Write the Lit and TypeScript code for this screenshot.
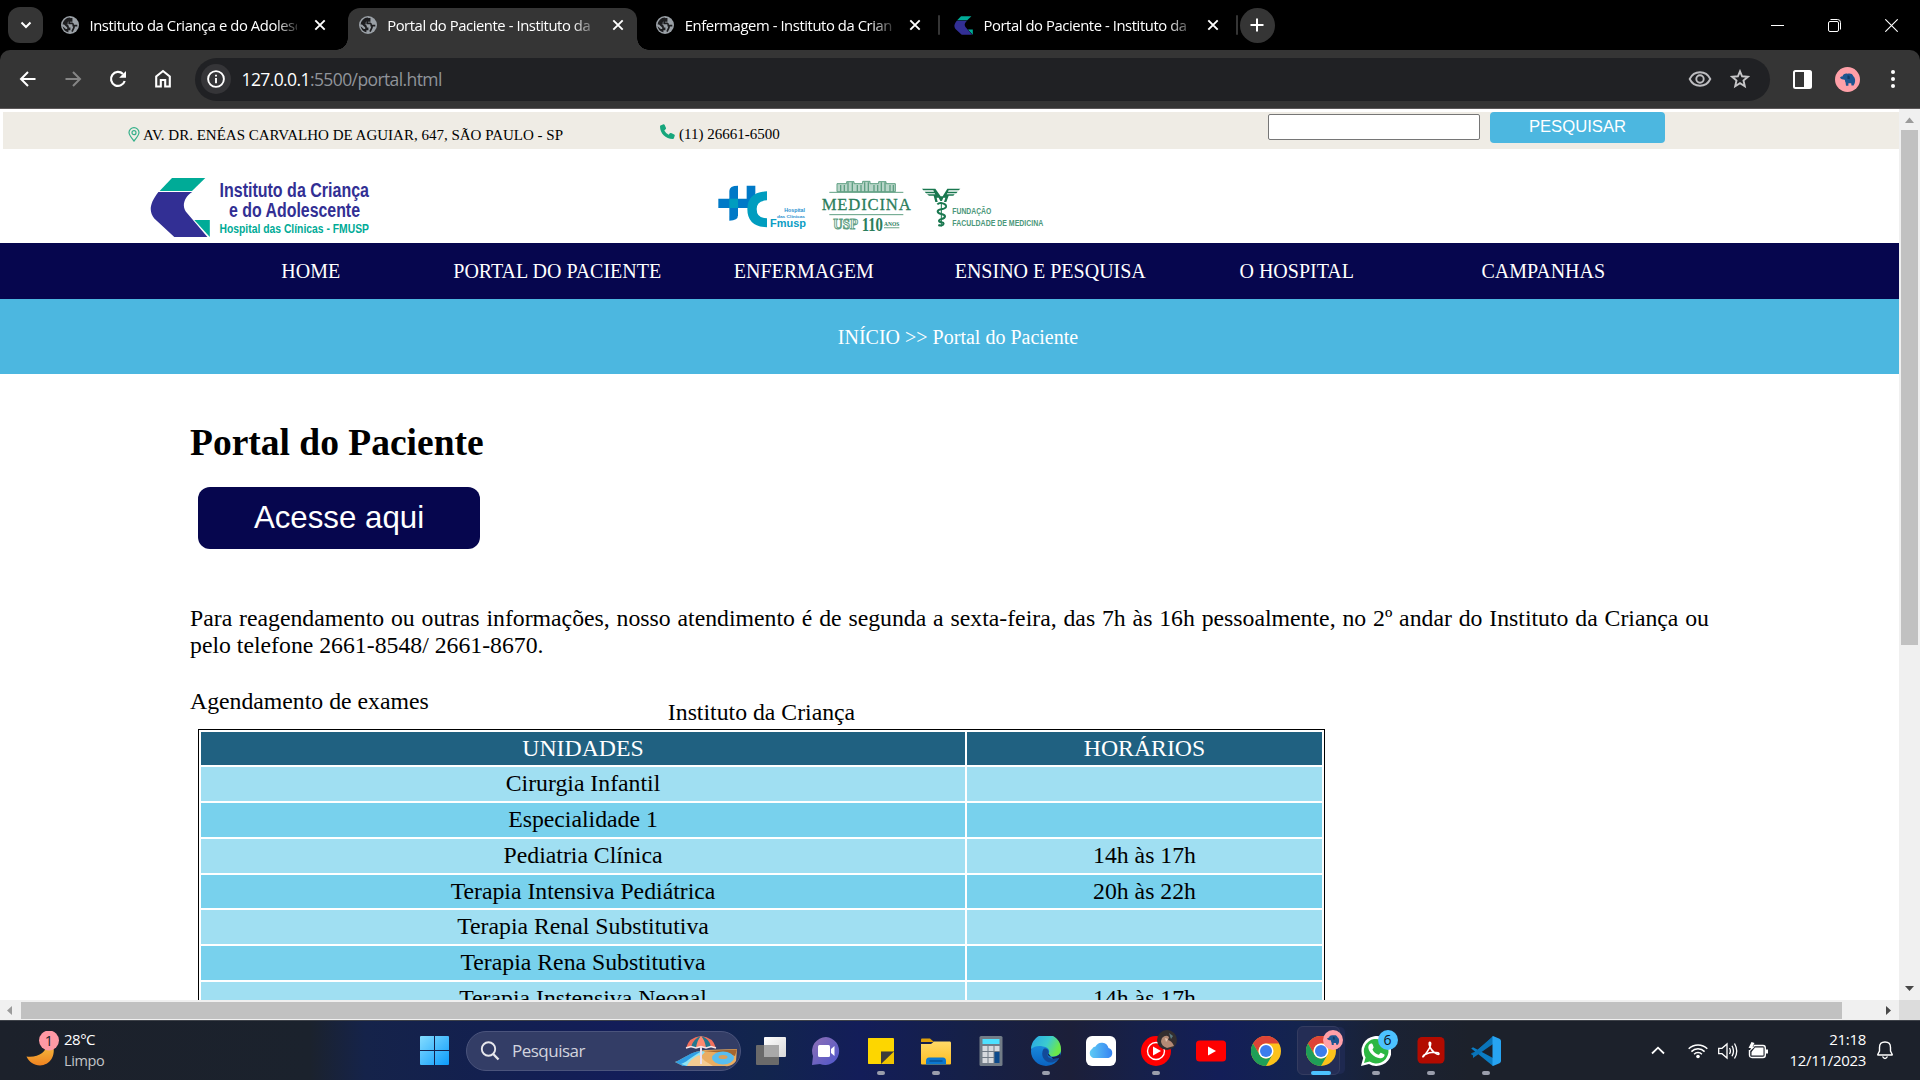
import { LitElement, html, css, svg } from "lit";
import { customElement } from "lit/decorators.js";
import { classMap } from "lit/directives/class-map.js";

/* ---------- shared drawings ---------- */

const globe = html`<svg width="18" height="18" viewBox="0 0 18 18">
  <circle cx="9" cy="9" r="9" fill="#9aa0a6" />
  <path d="M8.6 1.600A7.400 7.400 0 0 0 1.600 8.400H5.200Q7.800 8.400 7.800 10.300V11.600H9.400V14.300H7.400V16.200Q2.400 15.200 1.600 10.300L4.800 13H6.200V11.400L3 8.400H6.800Q6 6.400 7.600 5.200L10.400 4.600V2.600Z" fill="#1d1d1f" />
  <path d="M10.600 2V4.800H8.200V7.400H11.300Q12.300 7.600 12.300 9.600H16.300M12.300 9.600Q13.500 10 12.800 12L11 15.600" fill="none" stroke="#1d1d1f" stroke-width="1.700" />
</svg>`;

const institutoMark = html`<svg width="19" height="19" viewBox="150 177 60 61">
  <path d="M172 178H205.300L192 191H159.600Z" fill="#00ab97" />
  <path d="M158.400 192H192.200C184 197 181 207 187 213L207.400 237H174.300L154.300 218.500C149 212 149 204 158.400 192Z" fill="#322f94" />
  <path d="M194.300 220H209.800V237Z" fill="#00ab97" />
</svg>`;

const closeGlyph = html`<svg width="12" height="12" viewBox="0 0 12 12"><path d="M1.300 1.300 10.700 10.700M10.700 1.300 1.300 10.700" stroke="#fff" stroke-width="1.900" /></svg>`;

const elephant = svg`
  <circle cx="12.500" cy="12.500" r="12.500" fill="#ffa0a8" />
  <path d="M5 10.600C5.500 9.800 6.600 10 7.500 9.300C8.200 7 10.500 6 12.500 6.700C15 6 17.500 6.500 18.200 9C20.300 10.500 20.500 13.500 19.800 16L18.600 18.500H16.500L16.200 16.300H13.400V18.800H11L10.600 15.500C9.800 14.800 10.300 13.200 9.600 12.800C8 12.700 6 12.600 5 10.600Z" fill="#1e5590" />
  <path d="M12.500 8.500C14.500 8 15.500 10 14.500 12.300L12.300 11.800Z" fill="#123a66" />`;

const chromeMark = (size: number) => html`<svg width=${size} height=${size} viewBox="0 0 48 48">
  <circle cx="24" cy="24" r="24" fill="#fcc21b" />
  <path d="M3.200 12A24 24 0 0 1 44.800 12H24A12 12 0 0 0 13.600 30Z" fill="#dd4437" />
  <path d="M3.200 12A24 24 0 0 0 24 48L34.400 30A12 12 0 0 1 13.600 30Z" fill="#1f9e58" />
  <circle cx="24" cy="24" r="12" fill="#fff" />
  <circle cx="24" cy="24" r="9.600" fill="#3b7ded" />
</svg>`;

/* ---------- browser window frame ---------- */

interface Tab { title: string; icon: unknown; active?: boolean; sep?: boolean; }

const tabs: Tab[] = [
  { title: "Instituto da Criança e do Adolescente", icon: globe },
  { title: "Portal do Paciente - Instituto da Criança", icon: globe, active: true },
  { title: "Enfermagem - Instituto da Criança e", icon: globe, sep: true },
  { title: "Portal do Paciente - Instituto da Criança", icon: institutoMark, sep: true },
];

@customElement("browser-chrome")
class BrowserChrome extends LitElement {
  static styles = css`
    :host { display: block; height: 109px; background: #000; font-family: "Open Sans", "Noto Sans", sans-serif; color: #fff; }
    svg { display: block; flex: none; }
    .strip { display: flex; height: 50px; padding-left: 8px; align-items: center; }
    .search-tabs { width: 35px; height: 36px; border-radius: 12px; background: #353535; display: grid; place-items: center; }
    .tabs { display: flex; margin-left: 7px; height: 50px; }
    .tab { position: relative; width: 298px; height: 50px; margin-right: -0.350px; box-sizing: border-box; padding: 0 22px 0 11px; display: flex; align-items: center; }
    .tab svg { flex: none; }
    .title { margin-left: 10.500px; width: 210px; height: 24px; line-height: 24px; overflow: hidden; white-space: nowrap; font-size: 14.800px; letter-spacing: -0.420px;
      -webkit-mask-image: linear-gradient(90deg, #000 185px, transparent 213px); mask-image: linear-gradient(90deg, #000 185px, transparent 213px); }
    .close { margin-left: 17.500px; }
    .active { z-index: 1; }
    .active::before { content: ""; position: absolute; left: 0; right: 9px; top: 8px; bottom: 0; border-radius: 12px 12px 0 0; background: #353535; z-index: -1; }
    .active::after { content: ""; position: absolute; left: -12px; right: -3px; bottom: 0; height: 12px; z-index: -1;
      background: radial-gradient(circle at 0 0, transparent 11.500px, #353535 12px) left / 12px 12px no-repeat, radial-gradient(circle at 100% 0, transparent 11.500px, #353535 12px) right / 12px 12px no-repeat; }
    .sep::after { content: ""; position: absolute; right: 3px; top: 15px; width: 2px; height: 20px; background: #353535; border-radius: 1px; }
    .plus { width: 35px; height: 35px; border-radius: 50%; background: #353535; display: grid; place-items: center; margin-left: -1px; }
    .window { margin-left: auto; display: flex; gap: 44px; padding-right: 22px; align-items: center; }
    .bar { height: 58px; background: #353535; border-bottom: 1px solid #5c5859; border-radius: 10px 10px 0 0; display: flex; align-items: center; box-sizing: content-box; }
    .nav { display: flex; width: 195px; padding-left: 17px; box-sizing: border-box; gap: 23px; }
    .omni { width: 1575px; height: 43px; border-radius: 22px; background: #202124; display: flex; align-items: center; box-sizing: border-box; padding: 0 20px 0 6px; }
    .info { width: 30px; height: 30px; border-radius: 50%; background: #353538; display: grid; place-items: center; }
    .url { margin-left: 10.500px; flex: 1; font-size: 17.500px; letter-spacing: -0.600px; line-height: 24px; color: #90949a; }
    .url b { font-weight: 400; color: #fff; }
    .omni .right { display: flex; gap: 18px; align-items: center; }
    .tools { display: flex; align-items: center; margin-left: 23px; }
    .avatar { margin-left: 23px; }
    .dots { margin-left: 30.500px; }
  `;

  render() {
    return html`
      <div class="strip">
        <div class="search-tabs"><svg width="12" height="8" viewBox="0 0 12 8"><path d="M1.500 1.500 6 6 10.500 1.500" fill="none" stroke="#fff" stroke-width="2" /></svg></div>
        <div class="tabs">
          ${tabs.map((t) => html`<div class=${classMap({ tab: true, active: !!t.active, sep: !!t.sep })}>${t.icon}<span class="title">${t.title}</span><span class="close">${closeGlyph}</span></div>`)}
        </div>
        <div class="plus"><svg width="14" height="14" viewBox="0 0 14 14"><path d="M7 0.500V13.500M0.500 7H13.500" stroke="#fff" stroke-width="2" /></svg></div>
        <div class="window">
          <svg width="13" height="13"><path d="M0 6.500H13" stroke="#fff" /></svg>
          <svg width="13" height="13" viewBox="0 0 13 13" fill="none" stroke="#fff"><rect x="0.500" y="2.500" width="10" height="10" rx="1.500" /><path d="M2.500 0.500H9.500Q12.500 0.500 12.500 3.500V10.500" /></svg>
          <svg width="13" height="13" viewBox="0 0 13 13" stroke="#fff"><path d="M0.300 0.300 12.700 12.700M12.700 0.300 0.300 12.700" stroke-width="1.100" /></svg>
        </div>
      </div>
      <div class="bar">
        <div class="nav">
          <svg width="22" height="22" viewBox="-11 -11 22 22" fill="none" stroke="#fff" stroke-width="2"><path d="M7.500 0H-6.500M0 -7 -7 0 0 7" /></svg>
          <svg width="22" height="22" viewBox="-11 -11 22 22" fill="none" stroke="#858585" stroke-width="2"><path d="M-7.500 0H6.500M0 -7 7 0 0 7" /></svg>
          <svg width="22" height="22" viewBox="-11 -11 22 22" fill="none"><path d="M6.700 2A7 7 0 1 1 5 -5" stroke="#fff" stroke-width="2.200" /><path d="M8 -8V-1.200H1.200Z" fill="#fff" /></svg>
          <svg width="22" height="22" viewBox="-11 -11 22 22" fill="none" stroke="#fff" stroke-width="2.100"><path d="M-6.800 7.500V-2.500L0 -8 6.800 -2.500V7.500H2.200V1H-2.200V7.500Z" /></svg>
        </div>
        <div class="omni">
          <span class="info"><svg width="18" height="18" viewBox="0 0 18 18" fill="none" stroke="#fff" stroke-width="1.900"><circle cx="9" cy="9" r="7.900" /><path d="M9 8V13.300M9 4.700V6.600" /></svg></span>
          <span class="url"><b>127.0.0.1</b>:5500/portal.html</span>
          <span class="right">
            <svg width="24" height="18" viewBox="-12 -9 24 18" fill="none" stroke="#bdbdc0" stroke-width="1.900"><path d="M-10.300 0C-6 -9 6 -9 10.300 0C6 9 -6 9 -10.300 0Z" /><circle r="3.700" /></svg>
            <svg width="20" height="20" viewBox="-10 -10 20 20" fill="none" stroke="#c6c6c8" stroke-width="1.900"><path d="M0 -7.700 2.100 -2.700 7.800 -2.200 3.500 1.500 4.800 7.300 0 4.200 -4.800 7.300 -3.500 1.500 -7.800 -2.200 -2.100 -2.700Z" /></svg>
          </span>
        </div>
        <div class="tools">
          <svg width="19" height="19" viewBox="0 0 19 19"><rect x="1" y="1" width="17" height="17" rx="1.500" fill="none" stroke="#fff" stroke-width="2" /><path d="M11 1H18V18H11Z" fill="#fff" /></svg>
          <svg class="avatar" width="25" height="25">${elephant}</svg>
          <svg class="dots" width="4" height="18" fill="#fff"><circle cx="2" cy="2" r="2" /><circle cx="2" cy="9" r="2" /><circle cx="2" cy="16" r="2" /></svg>
        </div>
      </div>`;
  }
}

/* ---------- hospital page ---------- */

const menu = ["HOME", "PORTAL DO PACIENTE", "ENFERMAGEM", "ENSINO E PESQUISA", "O HOSPITAL", "CAMPANHAS"];

const schedule: [string, string][] = [
  ["Cirurgia Infantil", ""],
  ["Especialidade 1", ""],
  ["Pediatria Clínica", "14h às 17h"],
  ["Terapia Intensiva Pediátrica", "20h às 22h"],
  ["Terapia Renal Substitutiva", ""],
  ["Terapia Rena Substitutiva", ""],
  ["Terapia Instensiva Neonal", "14h às 17h"],
];

@customElement("portal-page")
class PortalPage extends LitElement {
  static styles = css`
    :host { display: block; height: 891px; overflow: hidden; background: #fff; color: #000; font-family: "Liberation Serif", serif; font-size: 23.750px; line-height: 27px; }
    svg { display: block; flex: none; }
    .top { height: 37px; margin: 3px 0 0 3px; background: #efece5; display: flex; align-items: flex-start; font-size: 15px; }
    .address { display: flex; width: 532px; padding: 10px 0 0 125px; box-sizing: border-box; margin-right: 125px; white-space: nowrap; }
    .address svg { margin: 5px 3px 0 0; }
    .phone { display: flex; padding-top: 9px; width: 608px; }
    .phone svg { margin: 3px 4px 0 0; }
    .query { width: 212px; height: 26px; margin-top: 2px; box-sizing: border-box; border: 1.500px solid #767676; border-radius: 2px; background: #fff; padding: 0; }
    .go { margin-left: 10px; width: 175px; height: 31px; border: 0; padding: 0 0 2px; border-radius: 4px; background: #4cb7e0; color: #fff; font: 16.670px "Liberation Sans", sans-serif; }
    .brands { height: 94px; display: flex; align-items: flex-start; padding: 27px 0 0 150px; box-sizing: border-box; }
    .partners { margin-left: 346px; }
    .menu { height: 56px; background: #06064e; display: grid; grid-template-columns: repeat(6, 246.500px); padding: 1px 0 0 187.500px; box-sizing: border-box; align-items: center; justify-items: center; color: #fff; font-size: 20px; white-space: nowrap; }
    .crumbs { height: 75px; background: #4cb7e0; color: #fff; font-size: 20px; display: flex; align-items: center; justify-content: center; padding: 1px 0 0 17px; box-sizing: border-box; }
    main { padding: 45px 190px 0; }
    h1 { margin: 0; font-size: 37.500px; line-height: 47px; }
    .access { display: block; margin: 21px 0 56px 8px; width: 282px; height: 62px; border: 0; border-radius: 12px; background: #06064e; color: #fff; font: 31.250px "Liberation Sans", sans-serif; padding: 0; }
    p { margin: 0; width: 1519px; text-align: justify; }
    .heading { display: grid; width: 1143px; height: 41px; margin-top: 29px; box-sizing: border-box; }
    .heading > * { grid-area: 1 / 1; }
    .caption { padding-top: 10.500px; text-align: center; }
    .table { width: 1127px; margin-left: 8px; box-sizing: border-box; border: 1px solid #000; padding: 2px; display: grid; grid-template-columns: 764px 355px; gap: 2px; grid-template-rows: 33px 34px 34px 34px 33px 34px 34px 34px; text-align: center; }
    .table > div { line-height: 33px; background: #a0dff2; }
    .table > .alt { background: #78d1ed; }
    .table > .head { background: #206181; color: #fff; }
    .sans { font-family: "Liberation Sans Narrow", "Liberation Sans", sans-serif; font-weight: 700; }
    .serif { font-family: "Liberation Serif", serif; }
  `;

  render() {
    return html`
      <div class="top">
        <div class="address">
          <svg width="12" height="15" viewBox="0 0 12 15" fill="none" stroke="#35b08a" stroke-width="1.200"><path d="M6 14C3 10.500 1 8 1 5.600A5 5 0 0 1 11 5.600C11 8 9 10.500 6 14Z" /><circle cx="6" cy="5.700" r="2" /></svg>
          <span>AV. DR. ENÉAS CARVALHO DE AGUIAR, 647, SÃO PAULO - SP</span>
        </div>
        <div class="phone">
          <svg width="15" height="15" viewBox="0 0 15 15"><path d="M0.500 1.600 3.500 0.300Q4.300 0.100 4.700 0.900L6 4Q6.200 4.800 5.600 5.300L4.300 6.400Q5.800 9.200 8.700 10.700L9.800 9.300Q10.300 8.700 11.100 9L14.200 10.400Q15 10.800 14.800 11.500L13.900 14.300Q13.600 15 12.900 15C5.500 15 0 9 0 2.400Q0 1.800 0.500 1.600Z" fill="#17a67c" /></svg>
          <span>(11) 26661-6500</span>
        </div>
        <input class="query" />
        <button class="go">PESQUISAR</button>
      </div>

      <div class="brands">
        <svg width="222" height="63" viewBox="150 176 222 63">
          <path d="M172 178H205.300L192 191H159.600Z" fill="#00ab97" />
          <path d="M158.400 192H192.200C184 197 181 207 187 213L207.400 237H174.300L154.300 218.500C149 212 149 204 158.400 192Z" fill="#322f94" />
          <path d="M194.300 220H209.800V237Z" fill="#00ab97" />
          <g class="sans" fill="#322f94">
            <text x="219.500" y="196.500" font-size="20" textLength="149.500" lengthAdjust="spacingAndGlyphs">Instituto da Criança</text>
            <text x="229" y="216.800" font-size="20" textLength="131" lengthAdjust="spacingAndGlyphs">e do Adolescente</text>
            <text x="219.500" y="232.500" font-size="12" textLength="149.500" lengthAdjust="spacingAndGlyphs" fill="#00ab97">Hospital das Clínicas - FMUSP</text>
          </g>
        </svg>
        <svg class="partners" width="327" height="59" viewBox="234 213 981 177">
          <path d="M268 347V258Q268 242 294 242V331Q294 347 268 347Z" fill="#0079c7" />
          <path d="M235 281H330V309H235ZM320 242H346V290H320Z" fill="#0079c7" />
          <path d="M268 281H294V309H268Z" fill="#009dbf" />
          <path d="M381 259Q322 262 322 312Q322 365 381 367V340Q350 340 350 312Q350 288 381 286Z" fill="#009dbf" />
          <g class="sans">
            <text x="433" y="322" font-size="14" textLength="62" lengthAdjust="spacingAndGlyphs" fill="#2a90cf">Hospital</text>
            <text x="411" y="339" font-size="13" textLength="84" lengthAdjust="spacingAndGlyphs" fill="#2a90cf">das Clínicas</text>
            <text x="390" y="366" font-size="33" textLength="108" lengthAdjust="spacingAndGlyphs" fill="#0b9dc4">Fmusp</text>
          </g>
          <g fill="none" stroke="#5f9f83" stroke-width="3">
            <path d="M568 262H790M568 329H790" />
            <path d="M591 236H620V230H642V236H668V229H690V236H716V230H738V236H766V260H591Z" fill="#b9d6c9" stroke-width="3" />
            <path d="M602 240V260M613 240V260M624 232V260M637 232V260M652 240V260M663 240V260M674 232V260M685 232V260M702 240V260M713 240V260M724 232V260M735 232V260M750 240V260M760 240V260" stroke-width="4" />
          </g>
          <g class="serif" fill="#2b7d5b">
            <text x="545" y="314" font-size="50" textLength="267" lengthAdjust="spacing" stroke="#2b7d5b" stroke-width="0.800">MEDICINA</text>
            <text x="580" y="373" font-size="44" font-weight="700" textLength="74" lengthAdjust="spacingAndGlyphs" fill="#fff" stroke="#5f9f83" stroke-width="3">USP</text>
            <text x="665" y="379" font-size="58" font-weight="700" textLength="64" lengthAdjust="spacingAndGlyphs">110</text>
            <text x="732" y="362" font-size="17" font-weight="700" textLength="46" lengthAdjust="spacingAndGlyphs">ANOS</text>
          </g>
          <path d="M732 368H778" stroke="#8fbba6" stroke-width="4" />
          <g fill="#19774f">
            <path d="M846 251H886L902 274L908 274L922 251H961L956 256H926L924 260H953L949 265H922L920 268H944L940 272H926L919 291H912L916 278H910L906 288H901L896 278H890L893 291H886L881 272H867L861 268H886L884 265H858L854 260H882L880 256H850Z" />
            <path d="M904 292V364" stroke="#19774f" stroke-width="3" />
            <path d="M892 298C900 290 920 296 918 306C914 316 892 310 893 320C894 330 914 324 915 334C914 344 898 340 897 347C897 354 911 350 911 356C910 363 900 362 895 360" fill="none" stroke="#19774f" stroke-width="6" />
          </g>
          <g class="sans" fill="#4b977a">
            <text x="937" y="326" font-size="25" textLength="117" lengthAdjust="spacingAndGlyphs">FUNDAÇÃO</text>
            <text x="937" y="363" font-size="25" textLength="273" lengthAdjust="spacingAndGlyphs">FACULDADE DE MEDICINA</text>
          </g>
        </svg>
      </div>

      <nav class="menu">${menu.map((m) => html`<span>${m}</span>`)}</nav>
      <div class="crumbs">INÍCIO &gt;&gt; Portal do Paciente</div>

      <main>
        <h1>Portal do Paciente</h1>
        <button class="access">Acesse aqui</button>
        <p>Para reagendamento ou outras informações, nosso atendimento é de segunda a sexta-feira, das 7h às 16h pessoalmente, no 2º andar do Instituto da Criança ou pelo telefone 2661-8548/ 2661-8670.</p>
        <div class="heading"><span>Agendamento de exames</span><span class="caption">Instituto da Criança</span></div>
        <div class="table">
          <div class="head">UNIDADES</div><div class="head">HORÁRIOS</div>
          ${schedule.map(([unit, hours], i) => html`<div class=${classMap({ alt: i % 2 === 1 })}>${unit}</div><div class=${classMap({ alt: i % 2 === 1 })}>${hours}</div>`)}
        </div>
      </main>`;
  }
}

/* ---------- taskbar ---------- */

interface App { art: unknown; mark?: "open" | "current"; }

const apps: App[] = [
  { art: html`<svg width="32" height="32" viewBox="-1 -1 32 32"><defs><linearGradient id="w" x1="0" y1="0" x2="1" y2="1"><stop stop-color="#fff" /><stop offset="1" stop-color="#d8d8d8" /></linearGradient></defs><rect y="9" width="23" height="20" rx="1" fill="#6a6a6a" /><rect x="8" y="1" width="22" height="20" rx="1" fill="url(#w)" /><rect x="8" y="9" width="15" height="12" fill="#a9a9a9" /></svg>` },
  { art: html`<svg width="30" height="30" viewBox="0 0 30 30"><defs><linearGradient id="c" x1="0" y1="0" x2="1" y2="1"><stop stop-color="#8f70b4" /><stop offset="1" stop-color="#4e56cc" /></linearGradient></defs><path d="M15 1A14 14 0 1 1 9 28L1 29 2 20A14 14 0 0 1 15 1Z" fill="url(#c)" /><rect x="7" y="9" width="12" height="12" rx="1.500" fill="#fff" /><path d="M20 13 23.500 10V20L20 17Z" fill="#fff" /></svg>` },
  { mark: "open", art: html`<svg width="30" height="30" viewBox="0 0 30 30"><path d="M2.500 2H27Q28 2 28 3V15L15.500 28H2.500Q2 28 2 27V3Q2 2 2.500 2Z" fill="#fdd600" /><path d="M15 28V15.500H28V28Z" fill="#f0c400" /><path d="M15 15.500H28L15 28Z" fill="#3b3b3b" /></svg>` },
  { mark: "open", art: html`<svg width="30" height="30" viewBox="0 0 30 30"><defs><linearGradient id="f" x1="0" y1="0" x2="0" y2="1"><stop stop-color="#ffd968" /><stop offset="1" stop-color="#fdbe22" /></linearGradient></defs><path d="M0 3.500Q0 2.500 1 2.500H9L13 6H0Z" fill="#dfa00a" /><path d="M0 8H10L13 5.500H29Q30 5.500 30 7V27.500Q30 28.500 29 28.500H1Q0 28.500 0 27.500Z" fill="url(#f)" /><path d="M5 28.500V25Q5 21.500 8 21.500H22Q25 21.500 25 25V28.500Z" fill="#0b78d0" /><path d="M8.500 25H21.500" stroke="#084f91" stroke-width="1.400" /></svg>` },
  { art: html`<svg width="30" height="30" viewBox="0 0 30 30"><rect x="3.500" width="23" height="30" rx="1.500" fill="#727c87" /><rect x="6.500" y="3" width="17" height="5" fill="#4ee1ff" /><path d="M6.500 10H11.500V15H6.500ZM12.500 10H17.500V15H12.500ZM18.500 10H23.500V15H18.500ZM6.500 16H11.500V21H6.500ZM12.500 16H17.500V21H12.500ZM6.500 22H11.500V27H6.500ZM12.500 22H17.500V27H12.500Z" fill="#d7dade" /><path d="M18.500 16H23.500V27H18.500Z" fill="#0c4a8c" /></svg>` },
  { mark: "open", art: html`<svg width="30" height="30" viewBox="0 0 30 30"><defs><linearGradient id="e1" x1="0" y1="0" x2="1" y2="0.400"><stop stop-color="#27a4e8" /><stop offset="0.600" stop-color="#3bcbd0" /><stop offset="1" stop-color="#6be84a" /></linearGradient><linearGradient id="e2" x1="0" y1="0" x2="0" y2="1"><stop stop-color="#209ce8" /><stop offset="1" stop-color="#0a63c2" /></linearGradient></defs><circle cx="15" cy="15" r="15" fill="url(#e2)" /><path d="M0 13A15 15 0 0 1 30 13.500C30.500 18 26 21 21.500 20.500C17.500 20 17 18.500 18 17C19 13 16 11 12 10.500C7 9.500 3 10.500 0 13Z" fill="url(#e1)" /><path d="M12.500 13C9 19 13 26.500 20 26.500C24 26.500 27 24 28 22C28 22 24 24 20 22.500C15.500 21 16.500 18 17.500 17C18.500 14 15 11.500 12.500 13Z" fill="#134a98" /><path d="M17 17C18 18 15.500 18.500 18.500 20.300C22 22 27 20.500 29 17.500L30.500 22 22 23Z" fill="#17204f" /></svg>` },
  { art: html`<svg width="30" height="30" viewBox="0 0 30 30"><defs><linearGradient id="i" x1="0" y1="0" x2="1" y2="0"><stop stop-color="#5fcbf5" /><stop offset="1" stop-color="#3583f2" /></linearGradient></defs><rect width="30" height="30" rx="6" fill="#fff" /><path d="M7.500 22A5 5 0 0 1 6 13A4 4 0 0 1 9.500 10.500A7 7 0 0 1 22.500 12A5.200 5.200 0 0 1 22.500 22Z" fill="url(#i)" /></svg>` },
  { mark: "open", art: html`<svg width="42" height="42" viewBox="-6 -6 42 42"><circle cx="15" cy="15" r="15" fill="#f00" /><circle cx="15" cy="15" r="8.500" fill="none" stroke="#fff" stroke-width="1.400" /><path d="M12 10.500 20 15 12 19.500Z" fill="#fff" /><circle cx="26" cy="4" r="10" fill="#332e30" /><path d="M21 2Q25 -2 28 1L27 4Q31 5 33 10L26 12Q20 10 20 5Z" fill="#b48a75" /><path d="M28 -3 32 0 30 3Z" fill="#5c7a80" /><path d="M24 2 27 3 25 6Z" fill="#e2c3b0" /></svg>` },
  { art: html`<svg width="30" height="30" viewBox="0 0 30 30"><rect y="4.500" width="30" height="21" rx="3.500" fill="#f00" /><path d="M12 10.500 20 15 12 19.500Z" fill="#fff" /></svg>` },
  { art: chromeMark(30) },
  { mark: "current", art: html`${chromeMark(30)}<svg class="badge" width="20" height="20" viewBox="0 0 25 25">${elephant}</svg>` },
  { mark: "open", art: html`<svg width="30" height="30" viewBox="0 0 30 30"><path d="M0 30 2.200 22A15 15 0 1 1 8 28Z" fill="#fff" /><path d="M3 27 4.600 21.500A12.300 12.300 0 1 1 8.600 25.600Z" fill="#2cb742" /><path d="M10 7.500C12 7 12 10 12.700 11.300C12.700 12.500 11 13 11.700 14C13 16.500 15 18 17.500 18.800C18.500 18.500 19 16.500 20 16.700L23.500 18.500C24 21 21 22.500 19 22.300C13 21.500 7.500 16 7.300 11.500C7.300 9.500 8.500 7.800 10 7.500Z" fill="#fff" /></svg><span class="count">6</span>` },
  { mark: "open", art: html`<svg width="30" height="30" viewBox="0 0 30 30"><rect x="1.500" y="1" width="27" height="26.500" rx="4.500" fill="#b30b00" /><path d="M7.500 20.500C10 17.500 15 10.500 14.700 7.500C14.700 5.500 12.700 6 13.200 8.500C14 12.500 17 16 21 18.200C23 19.200 23.800 17.500 22 16.700C18 15.700 13 16.500 9 18.500C6.500 19.800 6.300 21.700 7.500 20.500Z" fill="none" stroke="#fff" stroke-width="1.500" /></svg>` },
  { mark: "open", art: html`<svg width="30" height="30" viewBox="0 0 30 30"><path d="M22 0 2 18.500Q1 19.300 0.300 18.500L0.200 17.200 22 8Z" fill="#0069ab" /><path d="M0.200 12.500 2 11.200 22 22V30L0.200 12.500Z" fill="#0b7dc4" /><path d="M22 8 2 22V19.500L0.800 18.500 22 0.500Z" fill="#0a74b9" /><path d="M22 0 28.500 2.700Q30 3.500 30 5V25Q30 26.500 28.500 27.300L22 30Q21 29.500 21.500 28V2Q21 0.500 22 0Z" fill="#27a4f2" /></svg>` },
];

@customElement("task-bar")
class TaskBar extends LitElement {
  static styles = css`
    :host { display: flex; height: 60px; box-sizing: border-box; border-top: 1px solid #3e4249; align-items: center; color: #fff; font: 15px/21px "Open Sans", "Noto Sans", sans-serif;
      background: linear-gradient(90deg, #1c212b 0, #1b222d 310px, #15234a 365px, #13204f 480px, #131d59 620px, #12254d 760px, #131d59 860px, #152049 960px, #1c1f39 1070px, #16204a 1140px, #131e58 1220px, #14244e 1300px, #1a2235 1380px, #1c212b 1470px, #1c212b 100%); }
    svg { display: block; flex: none; }
    .weather { display: flex; width: 420px; padding-left: 26px; box-sizing: border-box; align-items: center; height: 58px; }
    .weather span { display: block; }
    .weather .now { margin: -2px 0 0 4px; letter-spacing: -0.500px; line-height: 21px; }
    .weather .dim { color: #c3c5c9; letter-spacing: -0.400px; font-size: 14.500px; }
    .search { width: 275px; height: 40px; border-radius: 20px; margin-left: 17px; background: #333d66; border: 1px solid #4b547c; box-sizing: border-box; display: flex; align-items: center; padding: 0 3px 0 13px; }
    .search label { margin-left: 12px; flex: 1; font-size: 17px; letter-spacing: -0.500px; color: #d2d4de; line-height: 24px; }
    .apps { display: flex; margin-left: 2.500px; }
    .app { position: relative; width: 55px; height: 58px; display: grid; place-items: center; }
    .open::after, .current::after { content: ""; position: absolute; left: 23.500px; bottom: 5px; width: 8px; height: 4px; border-radius: 2px; background: #9a9eac; }
    .current::after { left: 17.500px; width: 20px; background: #4cc2ff; }
    .current::before { content: ""; position: absolute; left: 3px; top: 4px; width: 43px; height: 49px; border-radius: 6px; background: #242d55; border: 1px solid #343c60; box-sizing: border-box; box-shadow: 6px 0 0 -1px #1e2950; }
    .current svg { position: relative; }
    .current .badge { position: absolute; left: 29px; top: 8px; }
    .count { position: absolute; left: 29px; top: 8px; width: 20px; height: 20px; border-radius: 50%; background: #4cc2ff; color: #10141c; text-align: center; font-size: 14px; line-height: 20px; }
    .tray { margin-left: auto; display: flex; align-items: center; padding-right: 27px; }
    .clock { margin: -2px 11px 0 21px; text-align: right; width: 77px; white-space: nowrap; letter-spacing: -0.300px; }
    .clock div { height: 21px; }
    .gap-l { margin-left: 23px; }
    .gap-s { margin-left: 10px; }
  `;

  render() {
    return html`
      <div class="weather">
        <svg width="34" height="40" viewBox="0 0 34 40"><defs><linearGradient id="m" x1="0" y1="0" x2="0" y2="1"><stop stop-color="#f6c343" /><stop offset="1" stop-color="#ef8220" /></linearGradient></defs>
          <path d="M27 14C30 25 24 34 14 34.500C8 34.500 3 31 0.500 25.500C12 27 21 21 21 12Z" fill="url(#m)" />
          <circle cx="23" cy="9.500" r="10" fill="#ff99a4" /><text x="23" y="15" font-size="14.500" text-anchor="middle" fill="#20242c">1</text></svg>
        <div class="now"><span>28°C</span><span class="dim">Limpo</span></div>
      </div>
      <svg width="29" height="29" viewBox="0 0 29 29"><defs><linearGradient id="g" x1="0" y1="0" x2="1" y2="1"><stop stop-color="#84dcff" /><stop offset="1" stop-color="#0c9bfb" /></linearGradient></defs><path d="M0 1Q0 0 1 0H14V14H0ZM15 0H28Q29 0 29 1V14H15ZM0 15H14V29H1Q0 29 0 28ZM15 15H29V28Q29 29 28 29H15Z" fill="url(#g)" /></svg>
      <div class="search">
        <svg width="20" height="20" viewBox="0 0 20 20" fill="none" stroke="#e6e7ec" stroke-width="1.900"><circle cx="8.500" cy="8" r="6.700" /><path d="M13.200 13 18.500 18.500" stroke-width="2.400" /></svg>
        <label>Pesquisar</label>
        <svg width="62" height="34" viewBox="0 0 62 34">
          <path d="M0 28C10 24 17 17 30 16L62 15L61 27Q57 33 50 32H8Z" fill="#e9ad62" />
          <path d="M0 28C10 24 15 18 26 17C24 23 14 25 12 32H8Z" fill="#2f9ee4" />
          <path d="M6 30C14 27 19 20 28 17L30 18C26 24 15 26 12 32Z" fill="#8fe3f2" />
          <path d="M28 17 62 15.500 60 22 50 19Z" fill="#a4652f" />
          <path d="M30 27 38 32H12Q15 25 24 21Z" fill="#f3cb92" />
          <ellipse cx="48" cy="24" rx="11" ry="6.500" fill="#58bdf0" /><ellipse cx="48" cy="23" rx="4.500" ry="2" fill="#d7a05c" />
          <path d="M26 2V30" stroke="#eadff0" stroke-width="2" />
          <path d="M11 14Q14 3 26 2Q38 3 41 14L36 13 31 14 26 13 21 14 16 13Z" fill="#f2705c" />
          <path d="M16 13Q18 5 26 2L21 14ZM26 2Q35 5 36 13L31 14Z" fill="#23788f" /><path d="M21 14Q22 6 26 2Q30 6 31 14L26 13Z" fill="#ff8a70" />
          <path d="M11 14 16 12.500 21 14 26 12.500 31 14 36 12.500 41 14" fill="none" stroke="#f3e6ea" stroke-width="1.600" />
        </svg>
      </div>
      <div class="apps">${apps.map((a) => html`<div class="app ${a.mark ?? ""}">${a.art}</div>`)}</div>
      <div class="tray">
        <svg width="14" height="9" viewBox="0 0 14 9"><path d="M1 7.500 7 1.700 13 7.500" fill="none" stroke="#fff" stroke-width="1.800" /></svg>
        <svg class="gap-l" width="20" height="16" viewBox="0 0 20 16" fill="none" stroke="#fff" stroke-width="1.500"><path d="M0.700 5.800A13 13 0 0 1 19.300 5.800M3.400 8.600A9.300 9.300 0 0 1 16.600 8.600M6.100 11.200A5.500 5.500 0 0 1 13.900 11.200" /><circle cx="10" cy="13.500" r="1.800" fill="#fff" stroke="none" /></svg>
        <svg class="gap-s" width="20" height="18" viewBox="0 0 20 18" fill="none" stroke="#fff" stroke-width="1.300"><path d="M0.700 6.300H4L9 2V16L4 11.700H0.700Z" /><path d="M11.500 6Q13.300 9 11.500 12M14 3.800Q17 9 14 14.200M16.500 1.500Q21 9 16.500 16.500" /></svg>
        <svg class="gap-s" width="20" height="18" viewBox="0 0 20 18"><path d="M5.500 3.500H15Q17.300 3.500 17.300 6V13Q17.300 15.500 15 15.500H4Q1.500 15.500 1.500 13V8" fill="none" stroke="#fff" stroke-width="1.400" /><path d="M7 5.500H15.500V13.500H3.500V10Z" fill="#fff" /><path d="M18 7.500H20V11.500H18Z" fill="#fff" /><path d="M3.500 0 0.500 6H3L1.500 9.500 7 4.500H4.500L6.500 1Z" fill="#fff" /></svg>
        <div class="clock"><div>21:18</div><div>12/11/2023</div></div>
        <svg width="16" height="19" viewBox="0 0 16 19" fill="none" stroke="#fff" stroke-width="1.400"><path d="M2.300 14H13.700L15 14Q15.500 14 15 13L13.500 10V6.500Q13.500 1 8 1Q2.500 1 2.500 6.500V10L1 13Q0.500 14 1 14Z" /><path d="M5.500 15.500Q8 19.500 10.500 15.500" /></svg>
      </div>`;
  }
}

/* ---------- desktop ---------- */

@customElement("app-root")
class AppRoot extends LitElement {
  static styles = css`
    :host { display: block; width: 1920px; height: 1080px; overflow: hidden; background: #000; }
    .view { display: grid; grid-template-columns: 1899px 21px; grid-template-rows: 891px 20px; }
    .v, .h { background: #f0f0f0; display: flex; }
    .v { flex-direction: column; align-items: center; padding: 7px 2px 0; height: 884px; justify-content: flex-start; }
    .v i { display: block; width: 17px; height: 515px; background: #c1c1c1; margin: 7px 0 auto; }
    .v svg:last-child { margin-bottom: 9px; }
    .h { align-items: center; padding: 0 8px 0 7px; }
    .h i { display: block; width: 1821px; height: 17px; background: #c1c1c1; margin: 0 auto 0 9px; }
    .corner { background: #dcdcdc; }
    svg { display: block; flex: none; }
  `;

  render() {
    return html`
      <browser-chrome></browser-chrome>
      <div class="view">
        <portal-page></portal-page>
        <div class="v"><svg width="9" height="7"><path d="M4.500 1.500 9 7H0Z" fill="#9b9b9b" /></svg><i></i><svg width="9" height="6"><path d="M0 1H9L4.500 6Z" fill="#484848" /></svg></div>
        <div class="h"><svg width="5" height="9"><path d="M5 0V9L0 4.500Z" fill="#9b9b9b" /></svg><i></i><svg width="5" height="9"><path d="M0 0V9L5 4.500Z" fill="#484848" /></svg></div>
        <div class="corner"></div>
      </div>
      <task-bar></task-bar>`;
  }
}
